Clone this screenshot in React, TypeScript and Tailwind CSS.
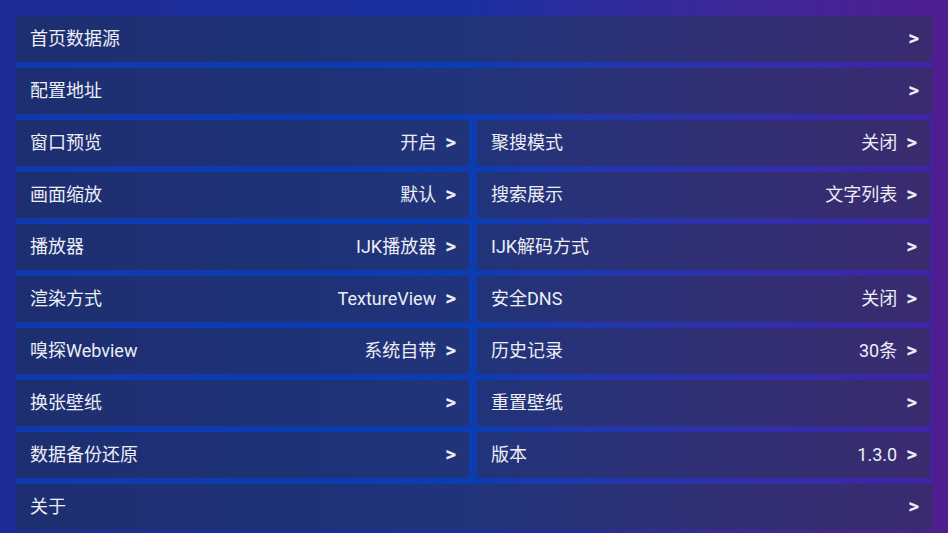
import React from "react";

type Item = { label: string; value?: string };

const font = { fontFamily: 'Roboto, "Noto Sans CJK SC", "Noto Sans", sans-serif' };

function Card({ item, className = "" }: { item: Item; className?: string }) {
  return (
    <div
      className={`h-[46px] flex items-center justify-between pl-[14px] pr-[13px] bg-fixed bg-linear-to-r from-[#1d2e70] via-[#21347a] to-[#3b2a6e] text-[18px] text-[#eceef6] ${className}`}
    >
      <span className="leading-none">{item.label}</span>
      <span className="flex items-center gap-[9px] leading-none">
        {item.value ? <span>{item.value}</span> : null}
        <span className="font-bold text-[21px] leading-none -mt-[2px]">&gt;</span>
      </span>
    </div>
  );
}

function Pair({ a, b }: { a: Item; b: Item }) {
  return (
    <div className="grid grid-cols-2 gap-[8px] pr-[2px]">
      <Card item={a} />
      <Card item={b} />
    </div>
  );
}

export default function App() {
  return (
    <div
      className="w-[948px] h-[533px] overflow-hidden bg-linear-to-r from-[#1e2b94] via-[#1a2fa0] to-[#4e1d90] px-4 pt-4"
      style={font}
    >
      <div className="flex flex-col gap-[6px] bg-linear-to-r from-[#0e3aac] via-[#0b3cb0] to-[#3d25a4]">
        <Card item={{ label: "首页数据源" }} />
        <Card item={{ label: "配置地址" }} />
        <Pair a={{ label: "窗口预览", value: "开启" }} b={{ label: "聚搜模式", value: "关闭" }} />
        <Pair a={{ label: "画面缩放", value: "默认" }} b={{ label: "搜索展示", value: "文字列表" }} />
        <Pair a={{ label: "播放器", value: "IJK播放器" }} b={{ label: "IJK解码方式" }} />
        <Pair a={{ label: "渲染方式", value: "TextureView" }} b={{ label: "安全DNS", value: "关闭" }} />
        <Pair a={{ label: "嗅探Webview", value: "系统自带" }} b={{ label: "历史记录", value: "30条" }} />
        <Pair a={{ label: "换张壁纸" }} b={{ label: "重置壁纸" }} />
        <Pair a={{ label: "数据备份还原" }} b={{ label: "版本", value: "1.3.0" }} />
        <Card item={{ label: "关于" }} />
      </div>
    </div>
  );
}
